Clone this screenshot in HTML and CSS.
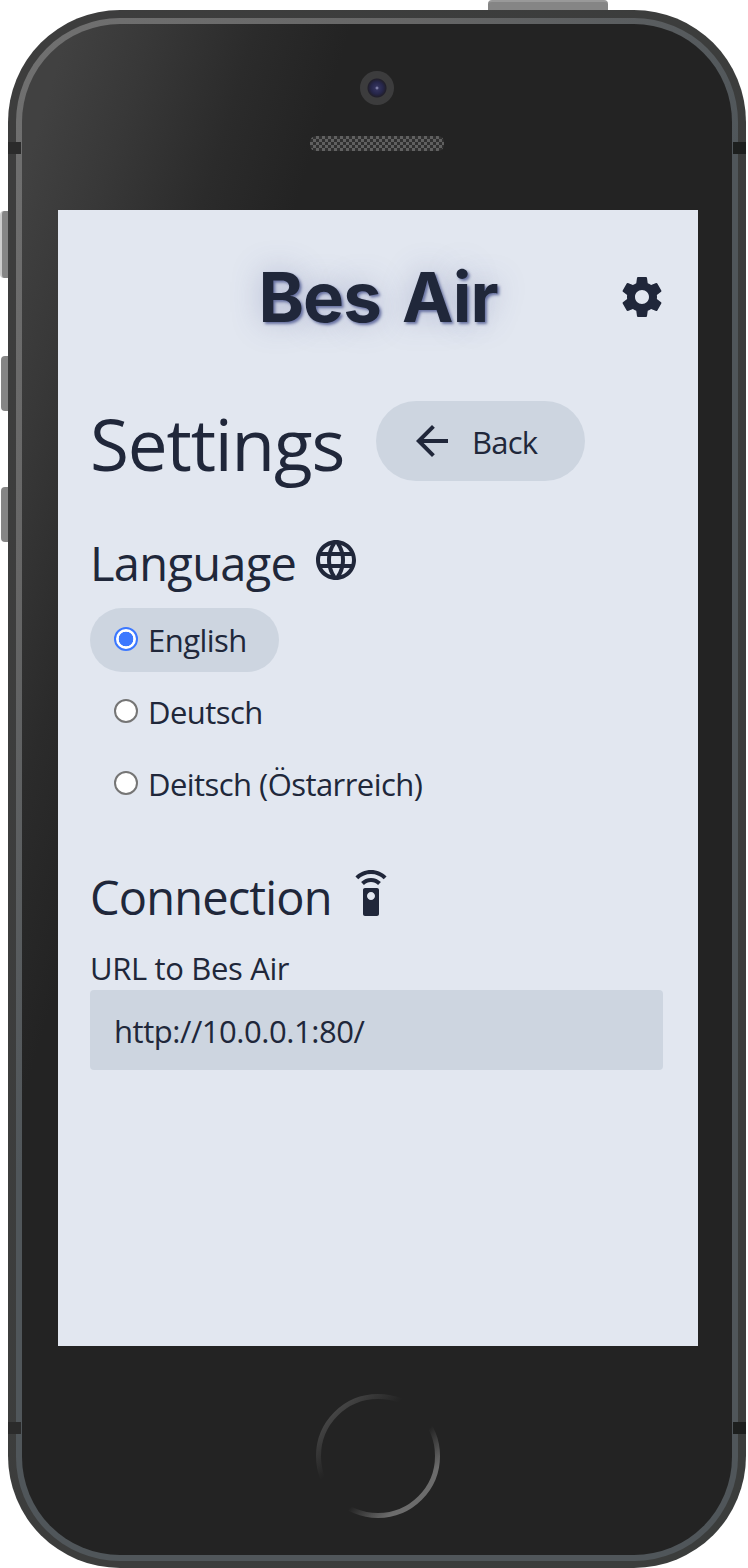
FILE: index.html
```html
<!DOCTYPE html>
<html lang="en">
<head>
<meta charset="utf-8">
<title>Bes Air</title>
<link rel="stylesheet" href="styles.css">
</head>
<body>
<div class="phone">
  <span class="key key-power"></span>
  <span class="key key-mute"></span>
  <span class="key key-up"></span>
  <span class="key key-down"></span>
  <div class="ring">
    <div class="face">
      <div class="top">
        <span class="camera"></span>
        <span class="grille"></span>
      </div>
      <main class="screen">
        <header class="header">
          <h1 class="brand">Bes Air</h1>
          <svg class="icon" viewBox="0 0 24 24"><path d="M19.43 12.98c.04-.32.07-.64.07-.98s-.03-.66-.07-.98l2.11-1.65c.19-.15.24-.42.12-.64l-2-3.46c-.12-.22-.39-.3-.61-.22l-2.49 1c-.52-.4-1.08-.73-1.69-.98l-.38-2.65C14.46 2.18 14.25 2 14 2h-4c-.25 0-.46.18-.49.42l-.38 2.65c-.61.25-1.17.59-1.69.98l-2.49-1c-.23-.09-.49 0-.61.22l-2 3.46c-.13.22-.07.49.12.64l2.11 1.65c-.04.32-.07.65-.07.98s.03.66.07.98l-2.11 1.65c-.19.15-.24.42-.12.64l2 3.46c.12.22.39.3.61.22l2.49-1c.52.4 1.08.73 1.69.98l.38 2.65c.03.24.24.42.49.42h4c.25 0 .46-.18.49-.42l.38-2.65c.61-.25 1.17-.59 1.69-.98l2.49 1c.23.09.49 0 .61-.22l2-3.46c.12-.22.07-.49-.12-.64l-2.11-1.65zM12 15.5c-1.93 0-3.5-1.57-3.5-3.5s1.57-3.5 3.5-3.5 3.5 1.57 3.5 3.5-1.57 3.5-3.5 3.5z"/></svg>
        </header>
        <div class="title-row">
          <h2 class="title">Settings</h2>
          <button class="back">
            <svg class="icon" viewBox="0 0 24 24"><path d="M20 11H7.83l5.59-5.59L12 4l-8 8 8 8 1.41-1.41L7.83 13H20v-2z"/></svg>
            <span class="back-text">Back</span>
          </button>
        </div>
        <section class="language">
          <div class="section-head">
            <h3 class="section-title language-title">Language</h3>
            <svg class="icon" viewBox="0 0 24 24"><path d="M11.99 2C6.47 2 2 6.48 2 12s4.47 10 9.99 10C17.52 22 22 17.52 22 12S17.52 2 11.99 2zm6.93 6h-2.95c-.32-1.25-.78-2.45-1.38-3.56 1.84.63 3.37 1.91 4.33 3.56zM12 4.04c.83 1.2 1.48 2.53 1.91 3.96h-3.82c.43-1.43 1.08-2.76 1.91-3.96zM4.26 14C4.1 13.36 4 12.69 4 12s.1-1.36.26-2h3.38c-.08.66-.14 1.32-.14 2s.06 1.34.14 2H4.26zm.82 2h2.95c.32 1.25.78 2.45 1.38 3.56-1.84-.63-3.37-1.9-4.33-3.56zm2.95-8H5.08c.96-1.66 2.49-2.93 4.33-3.56C8.81 5.55 8.35 6.75 8.03 8zM12 19.96c-.83-1.2-1.48-2.53-1.91-3.96h3.82c-.43 1.43-1.08 2.76-1.91 3.96zM14.34 14H9.66c-.09-.66-.16-1.32-.16-2s.07-1.35.16-2h4.68c.09.65.16 1.32.16 2s-.07 1.34-.16 2zm.25 5.56c.6-1.11 1.06-2.31 1.38-3.56h2.95c-.96 1.65-2.49 2.93-4.33 3.56zM16.36 14c.08-.66.14-1.32.14-2s-.06-1.34-.14-2h3.38c.16.64.26 1.31.26 2s-.1 1.36-.26 2h-3.38z"/></svg>
          </div>
          <div class="options">
            <label class="option selected"><input class="radio" type="radio" name="lang" checked><span>English</span></label>
            <label class="option"><input class="radio" type="radio" name="lang"><span>Deutsch</span></label>
            <label class="option"><input class="radio" type="radio" name="lang"><span>Deitsch (Östarreich)</span></label>
          </div>
        </section>
        <section class="connection">
          <div class="section-head">
            <h3 class="section-title connection-title">Connection</h3>
            <svg class="icon" viewBox="0 0 24 24"><path d="M15 9H9c-.55 0-1 .45-1 1v12c0 .55.45 1 1 1h6c.55 0 1-.45 1-1V10c0-.55-.45-1-1-1zm-3 6c-1.1 0-2-.9-2-2s.9-2 2-2 2 .9 2 2-.9 2-2 2zM7.05 6.05l1.41 1.41C9.37 6.56 10.62 6 12 6s2.63.56 3.54 1.46l1.41-1.41C15.68 4.78 13.93 4 12 4s-3.68.78-4.95 2.05zM12 0C8.96 0 6.21 1.23 4.22 3.22l1.41 1.41C7.26 3.01 9.51 2 12 2s4.74 1.01 6.36 2.64l1.41-1.41C17.79 1.23 15.04 0 12 0z"/></svg>
          </div>
          <label class="url-label" for="url">URL to Bes Air</label>
          <input class="url" id="url" type="text" value="http://10.0.0.1:80/">
        </section>
      </main>
      <div class="bottom">
        <svg class="home" viewBox="0 0 126 126">
          <defs>
            <linearGradient id="rim" x1="0" y1="0" x2="1" y2="1">
              <stop offset=".1" stop-color="#4a4a4a"/>
              <stop offset=".36" stop-color="#232323"/>
              <stop offset=".6" stop-color="#232323"/>
              <stop offset=".8" stop-color="#6c6c6c"/>
            </linearGradient>
          </defs>
          <circle cx="63" cy="63" r="59.5" fill="none" stroke="url(#rim)" stroke-width="5"/>
        </svg>
      </div>
    </div>
  </div>
  <span class="band band-tl"></span>
  <span class="band band-tr"></span>
  <span class="band band-bl"></span>
  <span class="band band-br"></span>
</div>
</body>
</html>
```
FILE: styles.css
```css
* { box-sizing: border-box; }

body {
  margin: 0;
  padding: 10px 2px 0 8px;
  height: 1568px;
  overflow: hidden;
  background: #fff;
  color: #20273a;
  font-family: "Open Sans", "Noto Sans", sans-serif;
}

h1, h2, h3 { margin: 0; font-weight: 400; }

.phone {
  position: relative;
  width: 738px;
  height: 1558px;
  padding: 8px;
  border-radius: 112px;
  background: linear-gradient(110deg, #3d3d3d, #3b3d3c);
}

.ring {
  height: 1543px;
  padding: 6px;
  border-radius: 104px;
  background: linear-gradient(125deg, #717171 0, #666 22%, #50565a 45%, #50565a 100%);
}

.face {
  display: flex;
  flex-direction: column;
  align-items: center;
  height: 1531px;
  padding-left: 2px;
  border-radius: 98px;
  background: linear-gradient(107deg, #414141 4%, #383838 11%, #2b2b2b 20%, #232323 28%, #232323 100%);
}

/* Hardware buttons */
.key {
  position: absolute;
  z-index: -1;
  background: #858585;
}
.key-power { left: 480px; top: -10px; width: 120px; height: 12px; border-radius: 4px 4px 0 0; border-top: 2px solid #999; }
.key-mute { left: -8px; top: 201px; width: 10px; height: 67px; border-radius: 4px 0 0 4px; border-left: 2px solid #ccc; }
.key-up { left: -7px; top: 346px; width: 10px; height: 55px; border-radius: 4px 0 0 4px; }
.key-down { left: -7px; top: 477px; width: 10px; height: 55px; border-radius: 4px 0 0 4px; }

/* Antenna bands across the frame */
.band { position: absolute; width: 13px; height: 12px; background: #2b2b2b; }
.band-tl { left: 0; top: 132px; }
.band-tr { right: 0; top: 132px; background: #1d1f1e; }
.band-bl { left: 0; top: 1412px; }
.band-br { right: 0; top: 1412px; background: #1d1f1e; }

.top {
  display: flex;
  flex-direction: column;
  align-items: center;
  height: 186px;
  padding: 47px 2px 0 0;
}

.camera {
  width: 34px;
  height: 34px;
  border-radius: 50%;
  background: radial-gradient(circle at 50% 50%, #a5a5cc 0, #33335c 2px, #26264a 6px, #211f2b 9px, #3c3c3d 10px);
}

.grille {
  width: 134px;
  height: 15px;
  margin-top: 31px;
  border-radius: 6px;
  background: conic-gradient(#303030 25%, #606060 0 50%, #303030 0 75%, #606060 0) 0 0 / 6px 6px;
}

.screen {
  width: 640px;
  height: 1136px;
  padding: 0 32px;
  background: #e2e7f0;
}

.icon { display: block; flex: none; width: 48px; height: 48px; fill: currentColor; }

.header {
  display: grid;
  grid-template-columns: 1fr 48px;
  align-items: center;
  height: 174px;
  padding-left: 48px;
}

.brand {
  font: 700 69px/80px Inter, sans-serif;
  letter-spacing: -1px;
  word-spacing: 6px;
  text-align: center;
  white-space: nowrap;
  text-shadow: 2px 2px 3px #6670a0, 0 0 30px rgba(80, 90, 150, .35);
}

.title-row {
  display: flex;
  align-items: center;
  height: 80px;
  margin-top: 17px;
}

.title {
  width: 286px;
  padding-top: 6px;
  font-size: 71px;
  line-height: 80px;
  letter-spacing: -1.15px;
  white-space: nowrap;
}

.back {
  display: flex;
  align-items: center;
  gap: 16px;
  width: 209px;
  height: 80px;
  padding: 0 32px;
  border: 0;
  border-radius: 40px;
  background: #cdd5e0;
  color: inherit;
  font: inherit;
  font-size: 31px;
  letter-spacing: -.8px;
}
.back-text { padding-top: 2px; }

.language { margin-top: 55px; }
.connection { margin-top: 54px; }

.section-head { display: flex; align-items: center; height: 48px; }
.section-title { padding-top: 5px; font-size: 47px; line-height: 48px; letter-spacing: -.7px; white-space: nowrap; }
.language-title { width: 222px; }
.connection-title { width: 257px; letter-spacing: -.85px; }

.options {
  display: flex;
  flex-direction: column;
  align-items: flex-start;
  gap: 8px;
  margin-top: 24px;
}

.option {
  display: flex;
  align-items: center;
  gap: 10px;
  height: 64px;
  padding: 0 24px;
  border-radius: 32px;
  font-size: 31px;
  letter-spacing: -.55px;
  white-space: nowrap;
}
.selected { width: 189px; background: #cdd5e0; }

.radio {
  appearance: none;
  flex: none;
  width: 24px;
  height: 24px;
  margin: 0 0 2px;
  border: 2px solid #757575;
  border-radius: 50%;
  background: #fff;
}
.radio:checked {
  border-color: #3c78ff;
  background: radial-gradient(circle, #3c78ff 7px, #fff 7.6px);
}

.url-label {
  display: flex;
  align-items: center;
  height: 40px;
  margin-top: 32px;
  padding-bottom: 5px;
  font-size: 31px;
  letter-spacing: -.35px;
}

.url {
  display: block;
  width: 573px;
  height: 80px;
  padding: 2px 24px 0;
  border: 0;
  border-radius: 4px;
  background: #cdd5e0;
  color: inherit;
  font: inherit;
  font-size: 31px;
  letter-spacing: -.45px;
}

.home { display: block; width: 126px; height: 126px; margin-top: 47px; }
```
